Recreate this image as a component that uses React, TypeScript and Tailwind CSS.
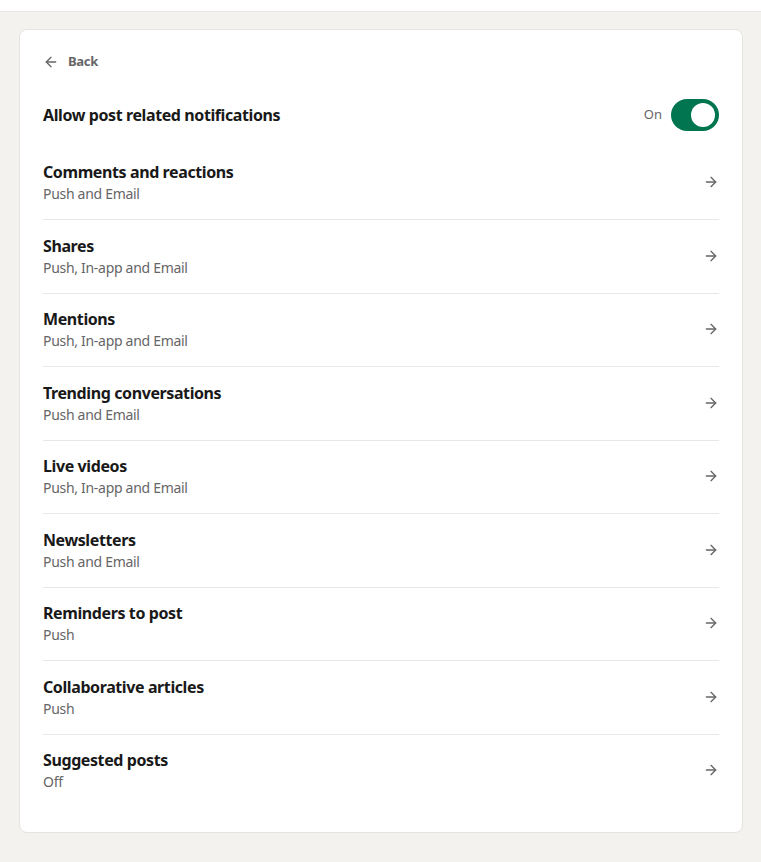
import { ArrowLeft, ArrowRight } from 'lucide-react';

interface NotificationRow {
  title: string;
  detail: string;
}

const rows: NotificationRow[] = [
  { title: 'Comments and reactions', detail: 'Push and Email' },
  { title: 'Shares', detail: 'Push, In-app and Email' },
  { title: 'Mentions', detail: 'Push, In-app and Email' },
  { title: 'Trending conversations', detail: 'Push and Email' },
  { title: 'Live videos', detail: 'Push, In-app and Email' },
  { title: 'Newsletters', detail: 'Push and Email' },
  { title: 'Reminders to post', detail: 'Push' },
  { title: 'Collaborative articles', detail: 'Push' },
  { title: 'Suggested posts', detail: 'Off' },
];

export default function App() {
  return (
    <div className="min-h-[862px] bg-[#f4f2ee] font-['Noto_Sans',sans-serif]">
      <div className="h-3 border-b border-[#e8e6e2] bg-white" />
      <div className="pt-[17px] pr-[18px] pb-[30px] pl-[19px]">
        <div className="rounded-lg border border-[#e6e4e0] bg-white px-[23px] pt-[22px] pb-[25px]">
          <button type="button" className="flex items-center gap-[9px] text-[13px] font-bold tracking-[-0.3px] text-[#666666]">
            <ArrowLeft className="h-4 w-4" strokeWidth={2} />
            <span>Back</span>
          </button>

          <div className="mt-[27px] flex items-center justify-between">
            <span className="text-[16px] font-bold tracking-[-0.4px] text-[#191919]">
              Allow post related notifications
            </span>
            <div className="flex items-center gap-[9px]">
              <span className="text-[13px] text-[#666666]">On</span>
              <div className="flex h-8 w-12 items-center justify-end rounded-full bg-[#01754f] px-1">
                <span className="h-6 w-6 rounded-full bg-white" />
              </div>
            </div>
          </div>

          <div className="mt-4">
            {rows.map((row, index) => (
              <div
                key={row.title}
                className={`flex items-center justify-between pt-[13.5px] pb-[15px] ${
                  index < rows.length - 1 ? 'border-b border-[#e8e8e8]' : ''
                }`}
              >
                <div className="min-w-0">
                  <div className="text-[16px] leading-6 font-bold tracking-[-0.4px] text-[#191919]">{row.title}</div>
                  <div className="text-[14px] leading-5 tracking-[-0.3px] text-[#666666]">{row.detail}</div>
                </div>
                <ArrowRight className="h-4 w-4 shrink-0 text-[#666666]" strokeWidth={2} />
              </div>
            ))}
          </div>
        </div>
      </div>
    </div>
  );
}
